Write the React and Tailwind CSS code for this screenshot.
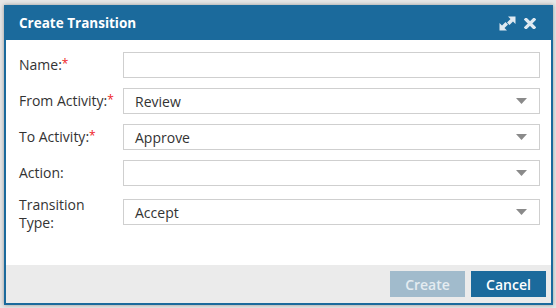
import { useState } from 'react'

const BLUE = 'bg-[#1b6a9c]'

function Label({ text, required }) {
  return (
    <label className="w-[104px] shrink-0 text-[14px] leading-[18px] text-[#333]">
      {text}
      {required && <sup className="text-[#ee1c25] text-[12px] relative top-[-2px]">*</sup>}
    </label>
  )
}

function Caret() {
  return (
    <svg width="11" height="6" viewBox="0 0 11 6" className="absolute right-[12px] top-1/2 -translate-y-1/2">
      <path d="M0 0 L11 0 L5.5 6 Z" fill="#8a8a8a" />
    </svg>
  )
}

function SelectBox({ value, className = '' }) {
  return (
    <div className={`relative flex-1 h-[26px] border border-[#cfcfcf] bg-white flex items-center pl-[11px] text-[14px] text-[#333] ${className}`}>
      {value}
      <Caret />
    </div>
  )
}

export default function App() {
  const [name, setName] = useState('')

  return (
    <div className="w-[556px] h-[308px] bg-[#e6e6e6] pt-[5px] pl-[4px]" style={{ fontFamily: '"Open Sans", Arial, sans-serif' }}>
      <div className="w-[549px] h-[300px] border-2 border-[#1b6a9c] flex flex-col shadow-[0_0_4px_rgba(0,0,0,0.35)]">
        <div className={`${BLUE} h-[33px] shrink-0 flex items-center justify-between pl-[13px] pr-[15px]`}>
          <h1 className="text-white font-bold text-[13.5px]">Create Transition</h1>
          <div className="flex items-center gap-[8px]">
            <svg width="17" height="15" viewBox="0 0 17 15" fill="#dfe9f1">
              <path d="M9 0.5 L16.5 0.5 L16.5 8 L14 5.5 L10.5 9 L8 6.5 L11.5 3 Z" />
              <path d="M0.5 14.5 L0.5 7 L3 9.5 L6.5 6 L9 8.5 L5.5 12 L8 14.5 Z" />
            </svg>
            <svg width="12" height="11" viewBox="0 0 12 11">
              <path d="M2 1.5 L10 9.5 M10 1.5 L2 9.5" stroke="#dfe9f1" strokeWidth="3.2" strokeLinecap="square" />
            </svg>
          </div>
        </div>

        <div className="bg-white flex-1 pt-[12px] pl-[13px] pr-[11px] flex flex-col gap-[10px]">
          <div className="flex items-center">
            <Label text="Name:" required />
            <input
              value={name}
              onChange={(e) => setName(e.target.value)}
              className="flex-1 h-[26px] border border-[#cfcfcf] bg-white outline-none px-[11px] text-[14px]"
            />
          </div>
          <div className="flex items-center">
            <Label text="From Activity:" required />
            <SelectBox value="Review" />
          </div>
          <div className="flex items-center">
            <Label text="To Activity:" required />
            <SelectBox value="Approve" />
          </div>
          <div className="flex items-center">
            <Label text="Action:" />
            <SelectBox value="" />
          </div>
          <div className="flex items-start">
            <Label text={<>Transition<br />Type:</>} />
            <SelectBox value="Accept" className="mt-[3px]" />
          </div>
        </div>

        <div className="bg-[#ebebeb] h-[38px] shrink-0 flex items-center justify-end gap-[6px] pr-[5px]">
          <button className="w-[75px] h-[26px] bg-[#a1bbcc] text-[#e4ecf1] font-semibold text-[14px]">Create</button>
          <button className={`w-[75px] h-[26px] ${BLUE} text-white font-semibold text-[14px]`}>Cancel</button>
        </div>
      </div>
    </div>
  )
}
